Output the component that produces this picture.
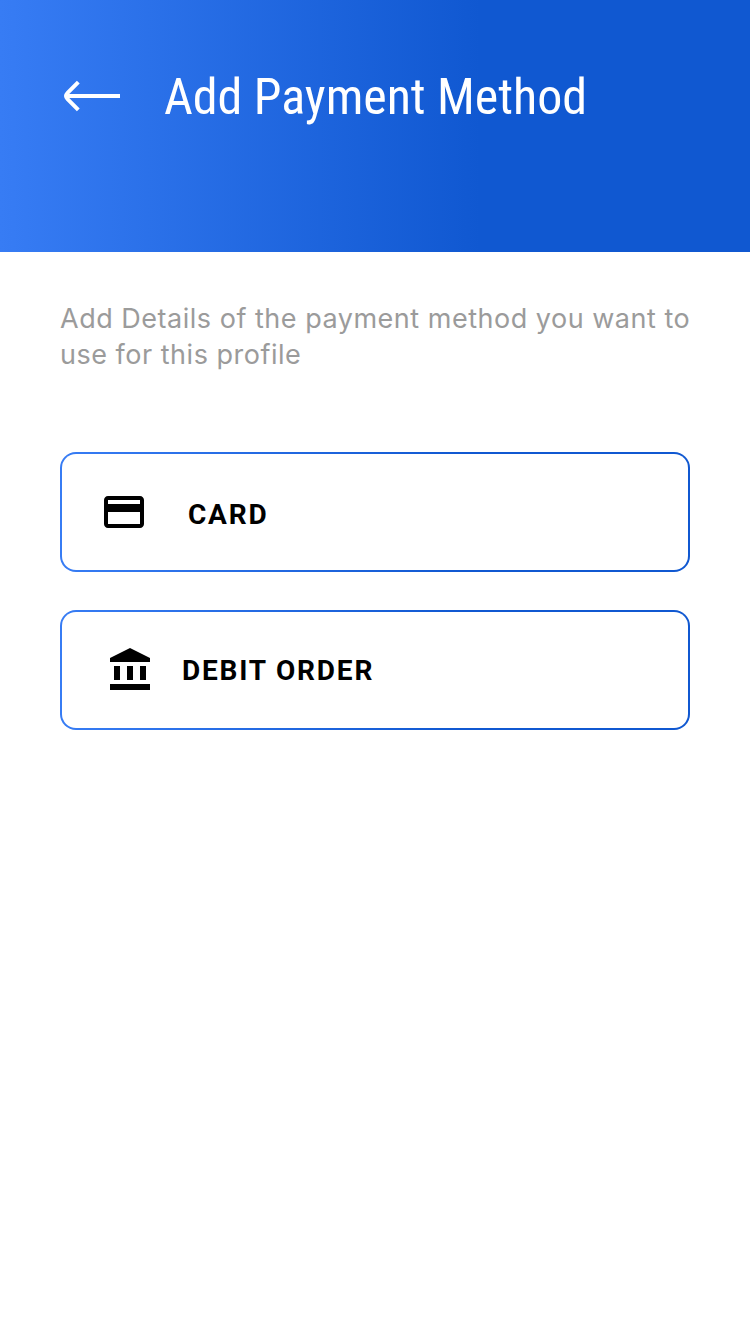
<main>
  <header>
    <svg class="back" width="57" height="34" viewBox="0 0 57 34" fill="none" stroke="#fff" stroke-width="4"><path d="M57 17H4M15.300 3.200L4.600 13.800Q1.600 17 4.600 20.200L15.300 30.800"/></svg>
    <h1>Add Payment Method</h1>
  </header>
  <p>Add Details of the payment method you want to<br />use for this profile</p>
  <div class="options">
    <button class="card">
      <svg width="48" height="48" viewBox="0 0 24 24"><path d="M20 4H4c-1.110 0-1.990.89-1.990 2L2 18c0 1.110.89 2 2 2h16c1.110 0 2-.89 2-2V6c0-1.110-.89-2-2-2zm0 14H4v-6h16v6zm0-10H4V6h16v2z"/></svg>
      <span>CARD</span>
    </button>
    <button class="debit">
      <svg width="40" height="42" viewBox="0 0 40 42"><path d="M20 0L40 10v4H0V10zM4 18h6v14H4zM17 18h6v14h-6zM30 18h6v14h-6zM0 36h40v6H0z"/></svg>
      <span>DEBIT ORDER</span>
    </button>
  </div>
</main>

<style>
  main { width: 750px; height: 1334px; background: #fff; overflow: hidden; }
  header { height: 252px; box-sizing: border-box; padding: 67px 0 0 63px; display: flex; align-items: flex-start; background: linear-gradient(90deg, #377cf4 0%, #1058d1 64%); }
  .back { margin-top: 12px; }
  h1 { margin: 0 0 0 44px; font: 400 50px/60px "Roboto Condensed", Roboto, sans-serif; font-stretch: condensed; letter-spacing: -0.02px; color: #fff; white-space: nowrap; }
  p { margin: 49px 0 0 60px; font: 400 27px/36px Inter, sans-serif; letter-spacing: 0.51px; color: #9b9b9b; white-space: nowrap; }
  .options { margin: 79px 60px 0; display: flex; flex-direction: column; gap: 38px; }
  button { height: 120px; padding: 0 0 0 38px; display: flex; align-items: center; border: 2px solid transparent; border-radius: 16px; background: linear-gradient(#fff, #fff) padding-box, linear-gradient(90deg, #377cf4, #1058d1 64%) border-box; color: #000; font: 700 28px/34px Roboto, sans-serif; letter-spacing: 1.8px; text-align: left; }
  .card span { margin: 6px 0 0 40px; }
  .debit { padding: 0 0 2px 48px; }
  .debit span { margin: 4px 0 0 32px; }
</style>
